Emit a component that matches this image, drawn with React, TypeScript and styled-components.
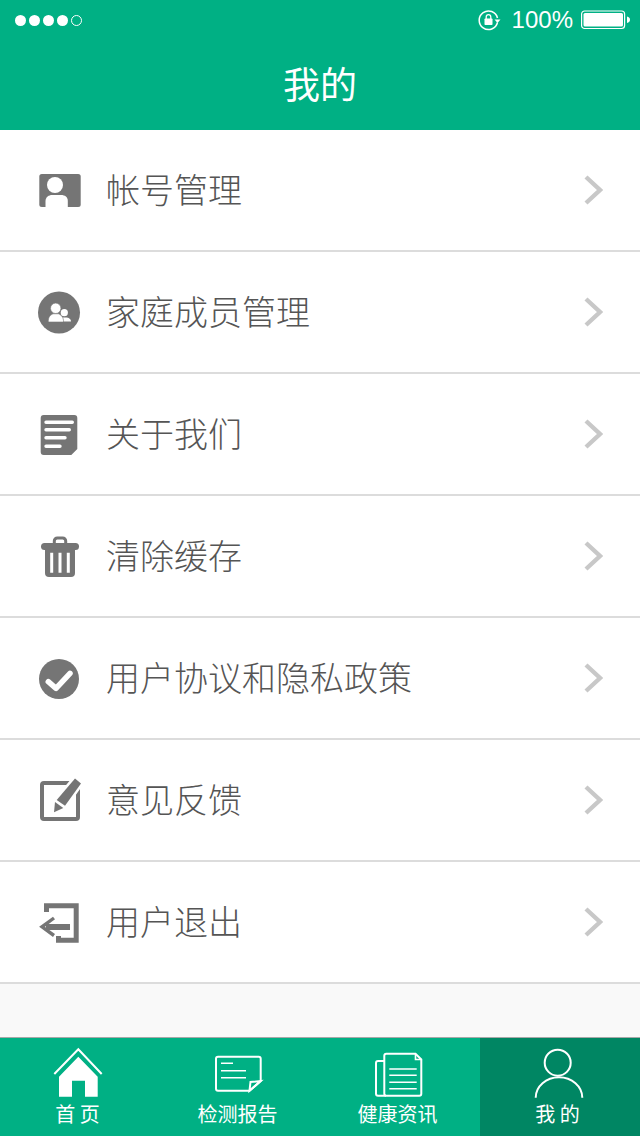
import React from 'react';
import styled, { createGlobalStyle } from 'styled-components';

const GREEN = '#00b084';
const ICON_GREY = '#757575';

const GlobalStyle = createGlobalStyle`
  html, body {
    margin: 0;
    padding: 0;
    background: #fff;
    font-family: "Noto Sans CJK SC", "Liberation Sans", sans-serif;
  }
`;

const Page = styled.div`
  width: 640px;
  height: 1136px;
  display: flex;
  flex-direction: column;
  overflow: hidden;
`;

const Header = styled.header`
  height: 130px;
  background: ${GREEN};
  color: #fff;
  flex: none;
`;

const StatusBar = styled.div`
  height: 40px;
  display: flex;
  align-items: center;
  justify-content: space-between;
  padding: 0 10px 0 15px;
`;

const Signal = styled.div`
  display: flex;
  gap: 3px;
`;

const Dot = styled.span<{ $hollow?: boolean }>`
  width: 11px;
  height: 11px;
  box-sizing: border-box;
  border-radius: 50%;
  background: ${(p) => (p.$hollow ? 'transparent' : '#fff')};
  border: ${(p) => (p.$hollow ? '1px solid #fff' : 'none')};
`;

const StatusRight = styled.div`
  display: flex;
  align-items: center;
`;

const Percent = styled.span`
  font-family: "Liberation Sans", Arial, sans-serif;
  font-size: 24px;
  line-height: 40px;
  margin: 0 8px 0 11px;
`;

const Title = styled.h1`
  margin: 0;
  height: 90px;
  line-height: 86px;
  font-size: 37px;
  font-weight: 400;
  text-align: center;
`;

const Content = styled.main`
  flex: 1;
  background: #f9f9f9;
`;

const List = styled.ul`
  margin: 0;
  padding: 0;
  list-style: none;
  background: #fff;
`;

const Row = styled.li`
  height: 122px;
  box-sizing: border-box;
  border-bottom: 2px solid #dcdcdc;
  display: flex;
  align-items: center;
  padding: 0 37px 0 38px;
`;

const RowIcon = styled.svg`
  width: 44px;
  height: 44px;
  flex: none;
  fill: ${ICON_GREY};
`;

const RowLabel = styled.span`
  flex: 1;
  margin-left: 24px;
  padding-bottom: 2px;
  font-size: 34px;
  font-weight: 300;
  color: #555;
  line-height: 44px;
`;

const Chevron = styled.svg`
  width: 20px;
  height: 32px;
  flex: none;
`;

const TabBar = styled.nav`
  height: 99px;
  flex: none;
  box-sizing: border-box;
  border-top: 1px solid #a8a8a8;
  background: ${GREEN};
  display: grid;
  grid-template-columns: repeat(4, 160px);
`;

const Tab = styled.div<{ $active?: boolean }>`
  display: flex;
  flex-direction: column;
  align-items: center;
  padding: 8px 4px 0 0;
  background: ${(p) => (p.$active ? '#008663' : 'transparent')};
  color: #fff;
`;

const TabIcon = styled.svg`
  width: 56px;
  height: 52px;
  flex: none;
  fill: none;
  stroke: #fff;
  stroke-width: 2;
`;

const TabLabel = styled.span`
  font-size: 20px;
  line-height: 32px;
  margin-right: 1px;
  white-space: pre;
`;

const W = '#fff';

const rows: { label: string; icon: React.ReactNode }[] = [
  {
    label: '帐号管理',
    icon: (
      <>
        <rect x="1.3" y="6" width="41.4" height="33" rx="2.5" />
        <circle cx="17" cy="17" r="8" fill={W} />
        <path d="M7.5 39V33C7.5 29 11 27 14 27H23C27 27 29.8 29 29.8 33V39Z" fill={W} />
      </>
    ),
  },
  {
    label: '家庭成员管理',
    icon: (
      <>
        <circle cx="21" cy="22.5" r="21" />
        <circle cx="26.3" cy="22.7" r="3.6" fill={W} />
        <path d="M24 27.5H29C31.5 28 33 29.5 33 31.5H24Z" fill={W} />
        <circle cx="17.7" cy="18.3" r="5.2" fill={W} stroke={ICON_GREY} strokeWidth="0.6" />
        <path d="M10.3 32C10 27 12.5 25 15 23.8H20.5C23 25 25.7 27 25.5 32Z" fill={W} stroke={ICON_GREY} strokeWidth="0.6" />
      </>
    ),
  },
  {
    label: '关于我们',
    icon: (
      <>
        <path d="M5.7 3H36.3a3 3 0 0 1 3 3V37L33.3 43H5.7a3 3 0 0 1-3-3V6a3 3 0 0 1 3-3Z" />
        <path
          d="M8 10.3H34.3M8 17.7H31.3M8 25.7H27M8 34.3H22"
          stroke={W}
          strokeWidth="3.4"
          strokeLinecap="round"
          fill="none"
        />
      </>
    ),
  },
  {
    label: '清除缓存',
    icon: (
      <>
        <path d="M16.3 10V7a3 3 0 0 1 3-3h5.4a3 3 0 0 1 3 3v3" fill="none" stroke={ICON_GREY} strokeWidth="3" />
        <rect x="3" y="9" width="38" height="7" rx="3.5" />
        <path d="M7 14H37V39a4 4 0 0 1-4 4H11a4 4 0 0 1-4-4Z" />
        <path d="M13.7 18.7V38.7M22 18.7V38.7M30.3 18.7V38.7" stroke={W} strokeWidth="3" fill="none" />
      </>
    ),
  },
  {
    label: '用户协议和隐私政策',
    icon: (
      <>
        <circle cx="21" cy="23" r="20" />
        <path
          d="M10.3 25.7L18 32.3L32 17.3"
          stroke={W}
          strokeWidth="5.5"
          strokeLinecap="round"
          strokeLinejoin="round"
          fill="none"
        />
      </>
    ),
  },
  {
    label: '意见反馈',
    icon: (
      <>
        <rect x="4" y="5" width="36" height="36" rx="2" fill="none" stroke={ICON_GREY} strokeWidth="4" />
        <path d="M16 34.3L17 24L25.3 30ZM18.7 22L37 .3L43 5.3L27 27.7Z" stroke={W} strokeWidth="5" fill={W} />
        <path d="M16 34.3L17 24L25.3 30Z" />
        <path d="M18.7 22L37 .6L43 5.6L27 27.7Z" />
      </>
    ),
  },
  {
    label: '用户退出',
    icon: (
      <>
        <path d="M8.5 12V5.8H38.2V40.2H20.5V36" fill="none" stroke={ICON_GREY} strokeWidth="5" />
        <path d="M16 18L4 26.8L16 35.5" fill="none" stroke={ICON_GREY} strokeWidth="3.4" />
        <path d="M8 27H32" stroke={ICON_GREY} strokeWidth="6" />
      </>
    ),
  },
];

const tabs: { label: string; active?: boolean; icon: React.ReactNode }[] = [
  {
    label: '首 页',
    icon: (
      <>
        <path d="M4.3 28L28.3 3.3L51.7 28" />
        <path d="M9 30.7L28.3 10.7L47.7 30.7V50.7H35V34.7H22V50.7H9Z" fill={W} stroke="none" />
      </>
    ),
  },
  {
    label: '检测报告',
    icon: (
      <>
        <path d="M8 10.7H48.7a2 2 0 0 1 2 2V35L39.5 44.7H8a2 2 0 0 1-2-2V12.7a2 2 0 0 1 2-2Z" />
        <path d="M39.5 44.7L40.5 36L50.7 35Z" />
        <path d="M11 17.3H23M11 24.7H36M11 31.7H36" strokeWidth="1.6" />
      </>
    ),
  },
  {
    label: '健康资讯',
    icon: (
      <>
        <path d="M14.3 15H8a2 2 0 0 0-2 2V47.7a2 2 0 0 0 2 2H16" />
        <path d="M16.3 7.7H45.5L51.3 13.5V47.7a2 2 0 0 1-2 2H16.3a2 2 0 0 1-2-2V9.7a2 2 0 0 1 2-2Z" />
        <path d="M45.5 7.7V13.5H51.3" strokeWidth="1.6" />
        <path d="M19.3 23H46.7M19.3 29.3H46.7M19.3 36.3H46.7M19.3 42.7H46.7" strokeWidth="1.4" />
      </>
    ),
  },
  {
    label: '我 的',
    active: true,
    icon: (
      <>
        <circle cx="27.7" cy="16.7" r="13" />
        <path d="M5.7 51.7A23.3 20.4 0 0 1 52.3 51.7" />
      </>
    ),
  },
];

const App: React.FC = () => (
  <>
    <GlobalStyle />
    <Page>
      <Header>
        <StatusBar>
          <Signal>
            <Dot />
            <Dot />
            <Dot />
            <Dot />
            <Dot $hollow />
          </Signal>
          <StatusRight>
            <svg width="24" height="24" viewBox="0 0 24 24" fill="none">
              <path d="M20.5 14.5A9.3 9.3 0 1 1 20.5 10" stroke={W} strokeWidth="1.5" />
              <path d="M17.5 11.5H23.5L20.5 15Z" fill={W} />
              <rect x="7.5" y="10.5" width="8" height="6.5" rx="0.8" fill={W} />
              <path d="M9.2 11V9a2.3 2.3 0 0 1 4.6 0v2" stroke={W} strokeWidth="1.3" />
            </svg>
            <Percent>100%</Percent>
            <svg width="49" height="20" viewBox="0 0 49 20" fill="none">
              <rect x=".6" y="1" width="43" height="17.5" rx="3" stroke={W} strokeWidth="1.2" />
              <rect x="2.5" y="3" width="39.5" height="13.5" rx="1.5" fill={W} />
              <path d="M46 6.5C48 7 49 8 49 9.7S48 12.5 46 13Z" fill={W} />
            </svg>
          </StatusRight>
        </StatusBar>
        <Title>我的</Title>
      </Header>
      <Content>
        <List>
          {rows.map((row) => (
            <Row key={row.label}>
              <RowIcon viewBox="0 0 44 44">{row.icon}</RowIcon>
              <RowLabel>{row.label}</RowLabel>
              <Chevron viewBox="0 0 20 32" fill="none">
                <path d="M3 3L17 16L3 29" stroke="#c8c8c8" strokeWidth="4.4" />
              </Chevron>
            </Row>
          ))}
        </List>
      </Content>
      <TabBar>
        {tabs.map((tab) => (
          <Tab key={tab.label} $active={tab.active}>
            <TabIcon viewBox="0 0 56 52">{tab.icon}</TabIcon>
            <TabLabel>{tab.label}</TabLabel>
          </Tab>
        ))}
      </TabBar>
    </Page>
  </>
);

export default App;
